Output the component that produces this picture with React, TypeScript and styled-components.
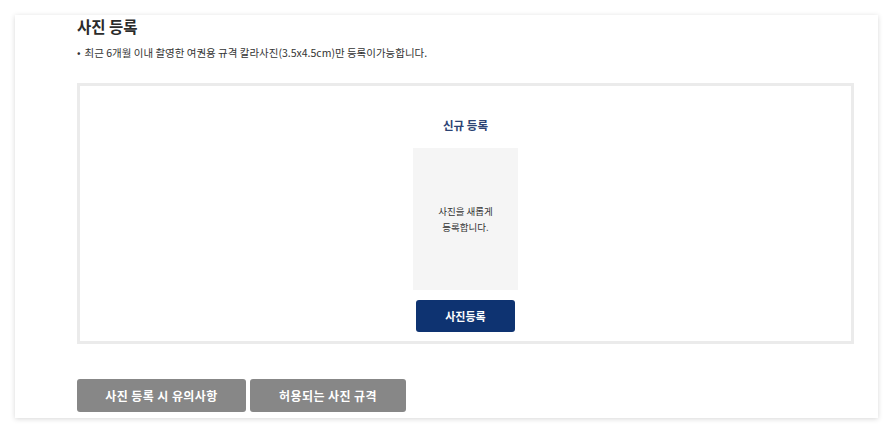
import React from "react";
import styled, { createGlobalStyle } from "styled-components";

const GlobalStyle = createGlobalStyle`
  html, body {
    margin: 0;
    padding: 0;
    background: #ffffff;
    font-family: "Noto Sans CJK KR", "Noto Sans", sans-serif;
    color: #222;
  }
  * { box-sizing: border-box; }
`;

const Page = styled.div`
  width: 892px;
  height: 434px;
  padding: 15px 14px 16px 15px;
`;

const Card = styled.section`
  background: #fff;
  height: 403px;
  padding: 1px 24px 6px 62px;
  box-shadow: 0 1px 5px rgba(0, 0, 0, 0.16);
  display: flex;
  flex-direction: column;
`;

const Title = styled.h2`
  margin: 0;
  font-size: 15.5px;
  line-height: 20px;
  font-weight: 700;
  color: #2b2b2b;
`;

const Notice = styled.p`
  margin: 10px 0 0;
  font-size: 10.5px;
  line-height: 14px;
  color: #333;
  &::before {
    content: "•";
    margin-right: 4px;
  }
`;

const UploadBox = styled.div`
  margin-top: 23px;
  height: 261px;
  border: 3px solid #ebebeb;
  display: flex;
  flex-direction: column;
  align-items: center;
  padding-top: 31px;
`;

const BoxLabel = styled.div`
  font-size: 11.5px;
  font-weight: 700;
  color: #2c4373;
  line-height: 16px;
`;

const Placeholder = styled.div`
  margin-top: 15px;
  width: 105px;
  height: 142px;
  background: #f5f5f5;
  display: flex;
  align-items: center;
  justify-content: center;
  text-align: center;
  font-size: 9.5px;
  line-height: 16px;
  color: #333;
`;

const PrimaryButton = styled.button`
  margin-top: 10px;
  width: 99px;
  height: 32px;
  border: 0;
  border-radius: 3px;
  background: #0e3371;
  color: #fff;
  font-family: inherit;
  font-size: 11px;
  font-weight: 700;
`;

const ButtonRow = styled.div`
  margin-top: 35px;
  display: flex;
  gap: 4px;
`;

const GrayButton = styled.button<{ $width: number }>`
  width: ${(p) => p.$width}px;
  height: 33px;
  border: 0;
  border-radius: 3px;
  background: #878787;
  color: #fff;
  font-family: inherit;
  font-size: 12px;
  font-weight: 700;
  letter-spacing: 0.4px;
`;

export default function App() {
  return (
    <>
      <GlobalStyle />
      <Page>
        <Card>
          <Title>사진 등록</Title>
          <Notice>최근 6개월 이내 촬영한 여권용 규격 칼라사진(3.5x4.5cm)만 등록이가능합니다.</Notice>
          <UploadBox>
            <BoxLabel>신규 등록</BoxLabel>
            <Placeholder>
              사진을 새롭게
              <br />
              등록합니다.
            </Placeholder>
            <PrimaryButton>사진등록</PrimaryButton>
          </UploadBox>
          <ButtonRow>
            <GrayButton $width={169}>사진 등록 시 유의사항</GrayButton>
            <GrayButton $width={156}>허용되는 사진 규격</GrayButton>
          </ButtonRow>
        </Card>
      </Page>
    </>
  );
}
